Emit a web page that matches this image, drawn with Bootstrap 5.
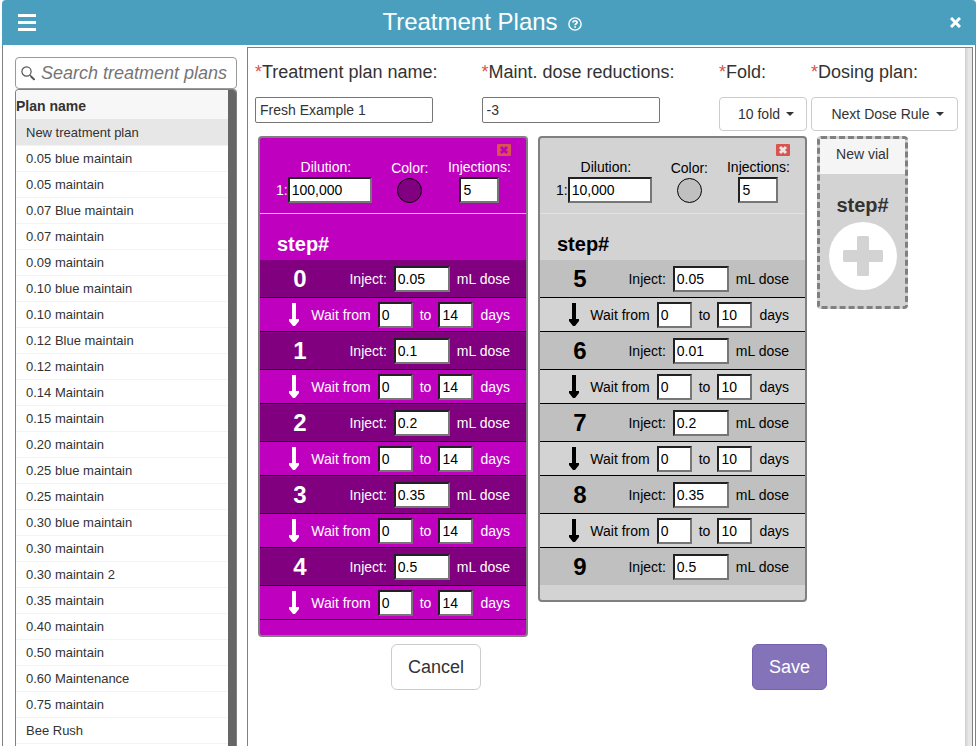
<!DOCTYPE html>
<html lang="en">
<head>
<meta charset="utf-8">
<meta name="viewport" content="width=device-width, initial-scale=1">
<title>Treatment Plans</title>
<link href="https://cdn.jsdelivr.net/npm/bootstrap@5.3.0/dist/css/bootstrap.min.css" rel="stylesheet">
<style>
body { font-family: "Liberation Sans", Arial, sans-serif; font-size: 14px; line-height: 20px; color: #333; background: #fff; }
.dialog-frame { padding: 0 1px 0 2px; }
.title-bar { height: 45px; background: #4a9fbf; color: #fff; border-radius: 4px 4px 0 0; padding: 0 15px 0 16px; }
.title-bar h1 { font-size: 24px; line-height: 30px; }
.title-group { gap: 10px; padding-right: 22px; padding-bottom: 2px; }
.title-bar button, .remove-vial, .add-vial { border: 0; padding: 0; background: none; color: inherit; display: block; line-height: 0; }
.dialog-body { border: solid #808080; border-width: 0 1px; padding: 2px 2px 0 12px; gap: 10px; min-height: 0; }
.plan-side { width: 222px; padding-top: 10px; }
.search-box { height: 32px; border: 1px solid #999; border-radius: 4px; padding: 0 8px 0 5px; gap: 6px; }
.search-box input { border: 0; outline: 0; padding: 0; font-size: 18px; font-style: italic; width: 100%; min-width: 0; background: none; }
.search-box input::placeholder { color: #757575; opacity: 1; }
.plan-list { border: 1px solid #808080; border-bottom: 0; border-radius: 4px 4px 0 0; overflow: hidden; min-height: 0; }
.plan-track { width: 8px; background: #666; }
.plan-table { width: 100%; font-size: 13px; color: #333; }
.plan-table th { height: 29px; font-size: 14px; background: #f7f7f7; padding: 2px 0 0; }
.plan-table td { height: 26px; padding: 2px 10px 0; border-bottom: 1px solid #f4f4f4; }
.plan-table .is-picked td { background: #e7e7e7; }
.plan-editor { border: 1px solid #808080; border-bottom: 0; overflow: hidden; min-width: 0; }
.editor-track { width: 7px; background: linear-gradient(90deg, #cfcfcf, #e6e6e6 50%, #e8e8e8); }
.editor-main { padding: 12px 7px 0; min-width: 0; }
.field-grid { display: grid; grid-template-columns: 227fr 238fr 92px 147px; }
.field-grid label { font-size: 18px; line-height: 24px; margin-bottom: 13px; white-space: nowrap; }
.req { color: #d9534f; }
.text-field { width: 178px; height: 26px; border: 1px solid #767676; border-radius: 2px; padding: 0 4px; color: #333; display: block; }
.menu-btn { --bs-btn-color: #333; --bs-btn-border-color: #ccc; --bs-btn-font-size: 14px; height: 34px; padding: 0 12px 0 18px; border-radius: 4px; line-height: 20px; white-space: nowrap; }
.menu-btn::after { margin-left: 6px; vertical-align: 3px; border-width: 4px; border-bottom: 0; }
.vial-row { padding: 5px 0 0 3px; gap: 10px; }
.vial-card { width: 270px; border: 2px solid #808080; border-radius: 4px; padding-bottom: 15px; background: var(--tone); color: var(--ink); }
.vial-violet { --tone: #bf00bf; --deep: #800080; --ink: #fff; --rule: #f0c0f0; --mark: #bf00bf; }
.vial-gray { --tone: #d3d3d3; --deep: #c0c0c0; --ink: #000; --rule: #e2e2e2; --mark: #e6e6e6; width: 269px; }
.vial-head { height: 76px; border-bottom: 1px solid var(--rule); padding: 6px 15px 0 16px; line-height: 16px; }
.remove-vial { width: 14px; height: 12px; background: #d9534f; border-radius: 1px; margin-left: auto; }
.vial-head label { display: block; text-align: center; line-height: 16px; margin-bottom: 2px; }
.head-part { padding-top: 3px; }
.color-part { padding-top: 1px; }
.vial-input { height: 26px; border: 2px inset #767676; border-radius: 0; padding: 0 2px; background: #fff; color: #000; display: block; }
.w-dose { width: 56px; } .w-day { width: 35px; } .w-dil { width: 84px; } .w-inj { width: 40px; }
.color-dot { width: 25px; height: 25px; border: 1px solid #000; border-radius: 50%; background: var(--deep); padding: 0; display: block; margin: 0 auto; }
.step-title { font-size: 20px; line-height: 24px; }
.vial-card .step-title { padding: 18px 0 4px 17px; }
.step-line { padding-right: 16px; gap: 7px; height: 34px; border-bottom: 1px solid #000; white-space: nowrap; }
.step-dose { height: 38px; background: var(--deep); }
.step-line:last-child.step-dose { height: 37px; border-bottom: 0; }
.step-no { width: 80px; text-align: center; font-size: 24px; }
.step-arrow { padding-left: 29px; line-height: 0; }
.new-vial { width: 91px; border: 3px dashed #808080; border-radius: 4px; background: #d3d3d3; padding-bottom: 16px; }
.new-vial-name { height: 35px; line-height: 31px; background: #f5f5f5; }
.new-vial .step-title { padding: 19px 0 5px; }
.foot-btn { height: 46px; font-size: 18px; padding: 0 16px; border-radius: 6px; }
.foot-row { padding: 7px 131px 0 136px; }
.btn-plain { --bs-btn-color: #333; --bs-btn-border-color: #ccc; }
.btn-violet { --bs-btn-color: #fff; --bs-btn-bg: #8573ba; --bs-btn-border-color: #7360b0; }
</style>
<script src="https://cdn.jsdelivr.net/npm/bootstrap@5.3.0/dist/js/bootstrap.bundle.min.js" defer></script>
</head>
<body>
<div class="dialog-frame vh-100 d-flex flex-column overflow-hidden">
  <header class="title-bar d-flex align-items-center flex-shrink-0">
    <button type="button" aria-label="Menu"><svg width="18" height="17" fill="currentColor"><path d="M0 0h18v3H0zM0 7h18v3H0zM0 14h18v3H0z"/></svg></button>
    <div class="title-group d-flex align-items-center justify-content-center flex-grow-1">
      <h1 class="m-0 fw-normal">Treatment Plans</h1>
      <button type="button" aria-label="Help"><svg width="14" height="14" viewBox="0 0 13 13" class="mt-1"><circle cx="6.500" cy="6.500" r="5.700" fill="none" stroke="#fff" stroke-width="1.300"/><path d="M4.600 5.100C4.700 2.900 8.400 3 8.400 5c0 1.300-1.800 1.300-1.800 2.600" fill="none" stroke="#fff" stroke-width="1.600"/><path d="M5.800 8.500h1.600V10H5.800z" fill="#fff"/></svg></button>
    </div>
    <button type="button" aria-label="Close"><svg width="11" height="11" viewBox="0 0 11 11" stroke="#fff" stroke-width="3"><path d="M1 1l9 9M10 1l-9 9"/></svg></button>
  </header>
  <div class="dialog-body d-flex flex-grow-1">
    <aside class="plan-side d-flex flex-column flex-shrink-0">
      <div class="search-box d-flex align-items-center flex-shrink-0">
        <svg class="flex-shrink-0" width="14" height="15" viewBox="0 0 14 15" fill="none" stroke="#555"><circle cx="5.500" cy="5.500" r="4.600" stroke-width="1.200"/><path d="M8.800 9l1.600 1.600" stroke-width="1.200"/><path d="M9.800 10.200l3.700 3.600" stroke-width="2"/></svg>
        <input type="text" placeholder="Search treatment plans" aria-label="Search treatment plans">
      </div>
      <div class="plan-list d-flex flex-grow-1">
        <div class="flex-grow-1"><table class="plan-table"><thead><tr><th scope="col">Plan name</th></tr></thead><tbody id="plans"></tbody></table></div>
        <div class="plan-track"></div>
      </div>
    </aside>
    <main class="plan-editor d-flex flex-grow-1">
      <div class="editor-main flex-grow-1">
        <div class="field-grid">
          <div><label class="d-block" for="planName"><span class="req">*</span>Treatment plan name:</label><input class="text-field" id="planName" type="text" value="Fresh Example 1"></div>
          <div><label class="d-block" for="reductions"><span class="req">*</span>Maint. dose reductions:</label><input class="text-field" id="reductions" type="text" value="-3"></div>
          <div><label class="d-block" for="fold"><span class="req">*</span>Fold:</label><button class="btn menu-btn dropdown-toggle" id="fold" type="button">10 fold</button></div>
          <div><label class="d-block" for="dosing"><span class="req">*</span>Dosing plan:</label><button class="btn menu-btn dropdown-toggle w-100" id="dosing" type="button">Next Dose Rule</button></div>
        </div>
        <div class="vial-row d-flex align-items-start" id="vials">
          <section class="new-vial text-center flex-shrink-0">
            <div class="new-vial-name">New vial</div>
            <div class="step-title fw-bold">step#</div>
            <button class="add-vial mx-auto" type="button" aria-label="Add vial"><svg width="68" height="68"><circle cx="34" cy="34" r="34" fill="#fff"/><path d="M29.500 14h9a1.500 1.500 0 0 1 1.500 1.500V28H52.500a1.500 1.500 0 0 1 1.500 1.500v9a1.500 1.500 0 0 1-1.500 1.500H40V52.500A1.500 1.500 0 0 1 38.500 54h-9a1.500 1.500 0 0 1-1.500-1.500V40H15.500a1.500 1.500 0 0 1-1.500-1.500v-9a1.500 1.500 0 0 1 1.500-1.500H28V15.500A1.500 1.500 0 0 1 29.500 14z" fill="#d3d3d3"/></svg></button>
          </section>
        </div>
        <div class="foot-row d-flex justify-content-between">
          <button class="btn btn-plain foot-btn" type="button">Cancel</button>
          <button class="btn btn-violet foot-btn" type="button">Save</button>
        </div>
      </div>
      <div class="editor-track flex-shrink-0"></div>
    </main>
  </div>
</div>
<script>
const plans = ["New treatment plan", "0.05 blue maintain", "0.05 maintain", "0.07 Blue maintain", "0.07 maintain", "0.09 maintain", "0.10 blue maintain", "0.10 maintain", "0.12 Blue maintain", "0.12 maintain", "0.14 Maintain", "0.15 maintain", "0.20 maintain", "0.25 blue maintain", "0.25 maintain", "0.30 blue maintain", "0.30 maintain", "0.30 maintain 2", "0.35 maintain", "0.40 maintain", "0.50 maintain", "0.60 Maintenance", "0.75 maintain", "Bee Rush"];
document.getElementById("plans").innerHTML = plans.map((p, i) => `<tr${i ? "" : ' class="is-picked"'}><td>${p}</td></tr>`).join("");

const vials = [
  { look: "violet", dilution: "100,000", first: 0, doses: ["0.05", "0.1", "0.2", "0.35", "0.5"], days: 14, waits: 5 },
  { look: "gray", dilution: "10,000", first: 5, doses: ["0.05", "0.01", "0.2", "0.35", "0.5"], days: 10, waits: 4 }
];
const arrow = '<svg width="10" height="23" fill="currentColor"><path d="M3 0h4v16h3v2l-4 5H4l-4-5v-2h3z"/></svg>';
const vialHtml = v => `<section class="vial-card vial-${v.look} flex-shrink-0">
  <div class="vial-head">
    <button class="remove-vial" type="button" aria-label="Remove vial"><svg width="14" height="12"><path d="M4 3l6 6M10 3l-6 6" stroke="var(--mark)" stroke-width="3"/></svg></button>
    <div class="d-flex justify-content-between head-part">
      <div><label class="ps-1" for="dil${v.first}">Dilution:</label><div class="d-flex align-items-center"><span>1:</span><input class="vial-input w-dil" id="dil${v.first}" type="text" value="${v.dilution}"></div></div>
      <div class="color-part"><label for="col${v.first}">Color:</label><button class="color-dot" id="col${v.first}" type="button"></button></div>
      <div><label for="inj${v.first}">Injections:</label><input class="vial-input w-inj mx-auto" id="inj${v.first}" type="text" value="5"></div>
    </div>
  </div>
  <div class="step-title fw-bold">step#</div>
  <div>${v.doses.map((d, i) => { const n = v.first + i; return `
    <div class="step-line step-dose d-flex align-items-center"><b class="step-no">${n}</b><label class="ms-auto" for="dose${n}">Inject:</label><input class="vial-input w-dose" id="dose${n}" type="text" value="${d}"><span>mL dose</span></div>` +
    (i < v.waits ? `<div class="step-line d-flex align-items-center"><span class="step-arrow">${arrow}</span><label class="ms-auto" for="from${n}">Wait from</label><input class="vial-input w-day" id="from${n}" type="text" value="0"><label for="to${n}">to</label><input class="vial-input w-day" id="to${n}" type="text" value="${v.days}"><span>days</span></div>` : ""); }).join("")}
  </div>
</section>`;
document.getElementById("vials").insertAdjacentHTML("afterbegin", vials.map(vialHtml).join(""));
</script>
</body>
</html>
